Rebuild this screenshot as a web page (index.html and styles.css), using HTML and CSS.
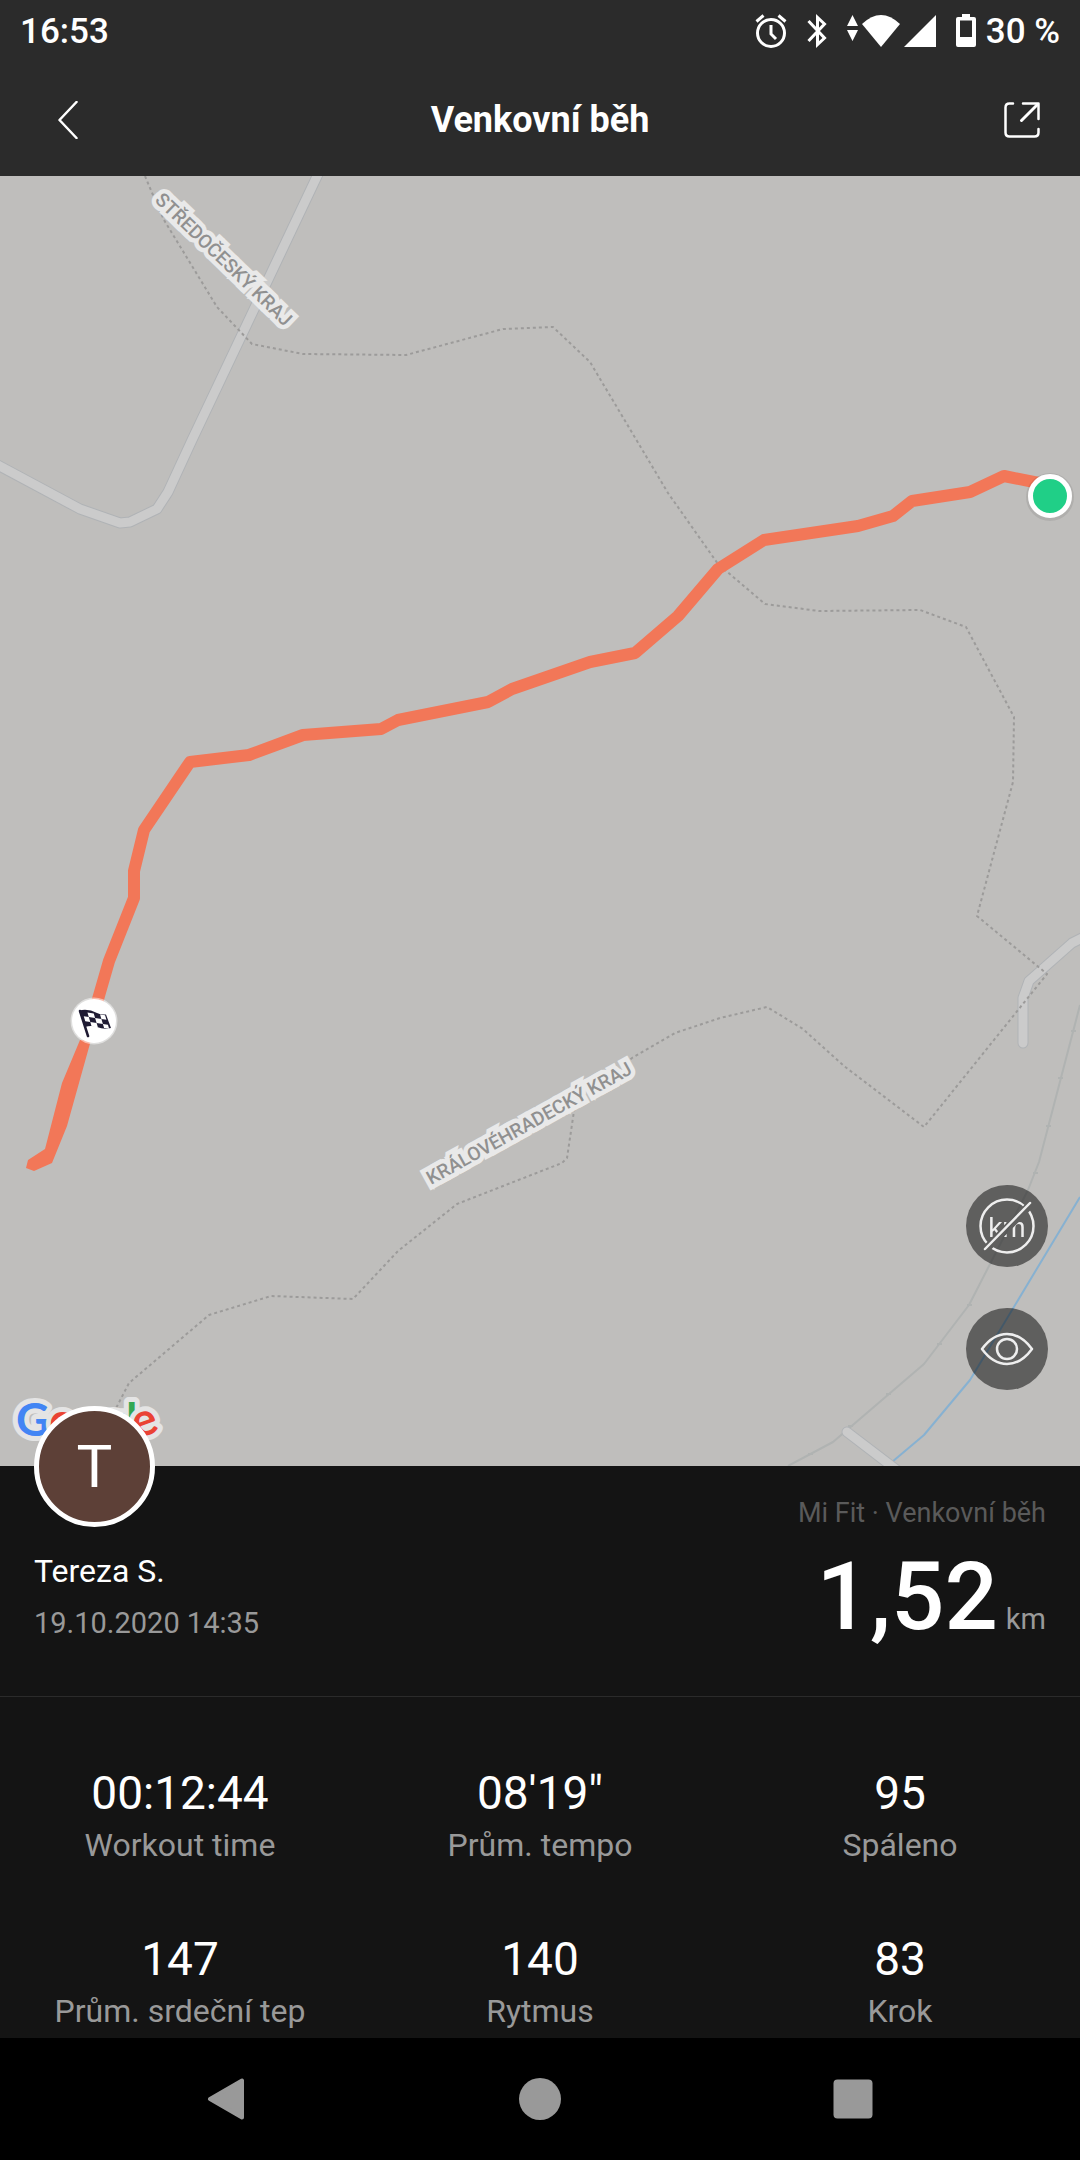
FILE: index.html
```
<!DOCTYPE html>
<html lang="cs">
<head>
    <meta charset="UTF-8">
    <meta name="viewport" content="width=device-width, initial-scale=1">
    <title>Venkovní běh</title>
    <link rel="stylesheet" href="styles.css">
</head>
<body>
    <div class="status">
        <span>16:53</span>
        <div class="status-icons">
            <svg width="32" height="34" viewBox="0 0 32 34" fill="none" stroke="#fff" stroke-width="3">
                <circle cx="16" cy="19" r="13.5"/>
                <path d="M16 11v9l5 5M1.5 7.5l7-6M30.5 7.5l-7-6"/>
            </svg>
            <svg width="20" height="34" viewBox="0 0 20 34" fill="none" stroke="#fff" stroke-width="3">
                <path d="M1.5 7l16 17-7 6.500V3.500l7 6.500L1.500 27"/>
            </svg>
            <div class="signal">
                <svg width="11" height="34" viewBox="0 0 11 34" fill="#fff"><path d="M5.500 1L11 12H0zM0 16h11L5.500 27z"/></svg>
                <svg width="38" height="34" viewBox="0 0 38 34" fill="#fff"><path d="M0 10Q19-8 38 10L19 33z"/></svg>
                <svg width="32" height="34" viewBox="0 0 32 34" fill="#fff"><path d="M32 1v32H0z"/></svg>
            </div>
            <div class="battery">
                <svg width="20" height="34" viewBox="0 0 20 34" fill="#fff">
                    <path fill-rule="evenodd" d="M6 0h8v3h4q2 0 2 2v26q0 2-2 2H2q-2 0-2-2V5q0-2 2-2h4zM4 6.500V23h12V6.500z"/>
                </svg>
                <span>30 %</span>
            </div>
        </div>
    </div>

    <header class="header">
        <button class="icon-btn" aria-label="Zpět">
            <svg width="20" height="38" viewBox="0 0 20 38" fill="none" stroke="#fff" stroke-width="2.500" stroke-linecap="round" stroke-linejoin="round"><path d="M18.500 1L1.500 19l17 18"/></svg>
        </button>
        <h1>Venkovní běh</h1>
        <button class="icon-btn" aria-label="Sdílet">
            <svg width="36" height="36" viewBox="0 0 36 36" fill="none" stroke="#fff" stroke-width="2.500" stroke-linecap="round" stroke-linejoin="round">
                <path d="M9 1.500H5.500q-4 0-4 4v25q0 4 4 4h25q4 0 4-4V27M19 1.500h15.500V17"/>
                <path d="M33.500 2.500L17.500 18.500" stroke-width="3"/>
            </svg>
        </button>
    </header>

    <main>
        <section class="map">
            <svg class="map-canvas" viewBox="0 176 1080 1290">
                <!-- railway and river -->
                <path class="rail" d="M1080 1005L1039 1162 1028 1190 969 1305 924 1364 833 1442 788 1466"/>
                <path class="rail" d="M1071 1031h5M1058 1078h5M1046 1126h5M1033 1173h5M967 1305h5M937 1344h5M886 1394h5M848 1426h5M808 1454h5"/>
                <path class="river" d="M1080 1197L970 1380 924 1435 892 1462"/>
                <!-- roads -->
                <g class="road-edge">
                    <path d="M320 170L192 440 168 492 157 509 130 522 120 523 80 509-6 463"/>
                    <path d="M1086 936L1072 943 1029 981 1023 998V1043"/>
                    <path d="M847 1432L902 1474"/>
                </g>
                <g class="road">
                    <path d="M320 170L192 440 168 492 157 509 130 522 120 523 80 509-6 463"/>
                    <path d="M1086 936L1072 943 1029 981 1023 998V1043"/>
                    <path d="M847 1432L902 1474"/>
                </g>
                <!-- region borders -->
                <path class="border" d="M145 176L153 195 164 220 217 307 252 344 303 354 406 355 503 329 553 327 590 362 668 493 718 564 765 604 819 611 920 610 966 627 1014 717 1013 782 977 916 1047 974 924 1127 844 1066 803 1029 767 1007 720 1018 675 1033 632 1058 580 1098 574 1111 567 1158 562 1163 457 1204 398 1251 353 1299 271 1296 209 1315 129 1383 112 1416"/>
                <text class="place" transform="translate(154 201) rotate(44)">STŘEDOČESKÝ KRAJ</text>
                <text class="place" transform="translate(431 1185) rotate(-29)">KRÁLOVÉHRADECKÝ KRAJ</text>
                <!-- workout track -->
                <path class="track" d="M1049 485L1004 476 970 492 912 501 893 516 858 526 764 540 718 569 678 616 635 653 590 662 512 689 488 702 398 720 381 729 303 735 249 755 190 762 144 830 134 871V898L109 961 92 1020"/>
                <path class="track-end" d="M80 1040L62 1083 45 1149 28 1160 26 1168 34 1171 52 1163 67 1126 91 1040z"/>
                <circle cx="1050" cy="497" r="24" fill="#000" opacity=".08"/>
                <circle cx="1050" cy="496" r="19.500" fill="#20cf87" stroke="#fff" stroke-width="5"/>
                <circle cx="94" cy="1021" r="23.500" fill="#fff" opacity=".5"/>
                <circle cx="94" cy="1021" r="22" fill="#fff"/>
                <path d="M80 1011L88 1036" stroke="#1f1b33" stroke-width="2.500" stroke-linecap="round"/>
                <path d="M79 1010.500Q88 1008 97 1013 101 1015 106 1014.500L111 1028Q104 1030 97 1027 91 1025 85 1027z" fill="#1f1b33"/>
                <g fill="#fff" transform="matrix(6.300 1 1.500 5 81 1011)">
                    <path d="M1 .1h1V1H1zM3 .1h.8V1H3zM.2 1H1v1H.2zM2 1h1v1H2zM1 2h1v.9H1zM3 2h.8v.8H3z"/>
                </g>
                <text class="google" x="16" y="1436"><tspan fill="#4285f4">G</tspan><tspan fill="#ea4335">o</tspan><tspan fill="#fbbc05">o</tspan><tspan fill="#4285f4">g</tspan><tspan fill="#34a853">l</tspan><tspan fill="#ea4335" dy="3" rotate="-20">e</tspan></text>
            </svg>
            <div class="map-tools">
                <button class="round" aria-label="Skrýt kilometry">
                    <svg width="82" height="82" viewBox="0 0 82 82" fill="none" stroke="#eee" stroke-width="2.500" stroke-linecap="round">
                        <mask id="cut">
                            <path d="M0 0h82v82H0z" fill="#fff" stroke="none"/>
                            <path d="M17 67L68 16" stroke="#000" stroke-width="8"/>
                        </mask>
                        <g mask="url(#cut)">
                            <circle cx="41" cy="41" r="26.500"/>
                            <text class="km-icon" x="41" y="52">km</text>
                        </g>
                        <path d="M19 64L64 18"/>
                    </svg>
                </button>
                <button class="round" aria-label="Zobrazit mapu">
                    <svg width="82" height="82" viewBox="0 0 82 82" fill="none" stroke="#eee" stroke-width="2.500" stroke-linejoin="round">
                        <path d="M16 41Q27 26 41 26T66 41Q55 56 41 56T16 41z"/>
                        <circle cx="41" cy="41" r="10"/>
                    </svg>
                </button>
            </div>
        </section>

        <section class="summary">
            <div class="user">
                <div class="avatar">T</div>
                <p class="name">Tereza S.</p>
                <p class="date">19.10.2020 14:35</p>
            </div>
            <div class="result">
                <p class="source">Mi Fit · Venkovní běh</p>
                <p class="distance">1,52<span class="unit">km</span></p>
            </div>
        </section>

        <dl class="stats">
            <div class="stat"><dd>00:12:44</dd><dt>Workout time</dt></div>
            <div class="stat"><dd>08'19"</dd><dt>Prům. tempo</dt></div>
            <div class="stat"><dd>95</dd><dt>Spáleno</dt></div>
            <div class="stat"><dd>147</dd><dt>Prům. srdeční tep</dt></div>
            <div class="stat"><dd>140</dd><dt>Rytmus</dt></div>
            <div class="stat"><dd>83</dd><dt>Krok</dt></div>
        </dl>
    </main>

    <nav class="navbar">
        <button aria-label="Zpět">
            <svg width="42" height="42" viewBox="0 0 42 42" fill="#999" stroke="#999" stroke-width="4" stroke-linejoin="round"><path d="M4 21L36 2.500v37z"/></svg>
        </button>
        <button aria-label="Domů">
            <svg width="42" height="42" viewBox="0 0 42 42" fill="#999"><circle cx="21" cy="21" r="21"/></svg>
        </button>
        <button aria-label="Poslední aplikace">
            <svg width="42" height="42" viewBox="0 0 42 42" fill="#999"><rect x="1.500" y="1.500" width="39" height="39" rx="4"/></svg>
        </button>
    </nav>
</body>
</html>
```

FILE: styles.css
```
* {
    margin: 0; padding: 0; box-sizing: border-box;
}
body {
    min-height: 100vh; display: flex; flex-direction: column; background: #141414; color: #fff; font-family: Roboto, "Liberation Sans", sans-serif;
}
svg {
    display: block;
}
button {
    border: 0; background: none; color: inherit; cursor: pointer;
}

/* status bar */
.status {
    height: 64px; padding: 0 20px; display: flex; align-items: center; justify-content: space-between; background: #2b2b2b; font-size: 35px; font-weight: 500; line-height: 64px;
}
.status-icons {
    display: flex; align-items: center; gap: 20px;
}
.status-icons svg {
    margin-bottom: 2px;
}
.signal {
    display: flex; gap: 4px;
}
.battery {
    display: flex; align-items: center; gap: 10px;
}

/* header */
.header {
    height: 112px; padding: 0 40px; display: flex; align-items: center; justify-content: space-between; background: #2b2b2b;
}
.header h1 {
    font-size: 36px; font-weight: 700;
}
.icon-btn {
    width: 56px; display: flex; justify-content: center;
}
.icon-btn:last-child {
    justify-content: flex-end;
}

/* map */
.map {
    position: relative; background: #bfbebc;
}
.map-canvas {
    width: 100%; height: auto;
}
.map-canvas path {
    stroke-linejoin: round;
}
.rail {
    fill: none; stroke: #b0b3b2; stroke-width: 2;
}
.river {
    fill: none; stroke: #87b1d1; stroke-width: 2;
}
.road-edge {
    fill: none; stroke: #b0b3b6; stroke-width: 11; stroke-linecap: round;
}
.road {
    fill: none; stroke: #cbcbcb; stroke-width: 9; stroke-linecap: round;
}
.border {
    fill: none; stroke: #9c9b9a; stroke-width: 2; stroke-dasharray: 3 3;
}
.place {
    font-size: 19px; font-weight: 500; fill: #909090; stroke: #e9e9e9; stroke-width: 9; paint-order: stroke;
}
.track {
    fill: none; stroke: #f27758; stroke-width: 12;
}
.track-end {
    fill: #f27758;
}
.google {
    font-family: Lato, sans-serif; font-size: 46px; font-weight: 700; stroke: #e4e4e4; stroke-width: 10; stroke-linejoin: round; paint-order: stroke;
}
.map-tools {
    position: absolute; right: 32px; bottom: 76px; display: flex; flex-direction: column; gap: 41px;
}
.round {
    width: 82px; height: 82px; border-radius: 50%; background: rgba(0,0,0,.5);
}
.km-icon {
    font-size: 28px; fill: #eee; stroke: none; text-anchor: middle;
}

/* summary */
.summary {
    position: relative; padding: 26px 34px 36px; display: flex; justify-content: space-between; border-bottom: 1px solid #2b2b2b;
}
.avatar {
    width: 121px; height: 121px; margin: -86px 0 22px; border: 5px solid #fff; border-radius: 50%; background: #5d4037; font-size: 60px; line-height: 111px; text-align: center;
}
.name {
    margin-bottom: 8px; font-size: 32px; line-height: 44px;
}
.date {
    font-size: 29px; line-height: 44px; color: #999;
}
.result {
    text-align: right;
}
.source {
    font-size: 27px; line-height: 42px; color: #5a5a5a;
}
.distance {
    font-size: 94px; font-weight: 500; line-height: 126px;
}
.unit {
    margin-left: 8px; font-size: 29px; font-weight: 400; line-height: 40px; color: #999;
}

/* stats */
.stats {
    padding: 66px 0 5px; display: grid; grid-template-columns: repeat(3, 1fr); row-gap: 62px; text-align: center;
}
.stat dd {
    font-size: 46px; line-height: 60px;
}
.stat dt {
    font-size: 32px; line-height: 44px; color: #999;
}

/* bottom bar */
.navbar {
    flex: 1; min-height: 122px; padding: 0 70px; display: grid; grid-template-columns: repeat(3, 1fr); background: #000;
}
.navbar button {
    display: flex; align-items: center; justify-content: center;
}
```
